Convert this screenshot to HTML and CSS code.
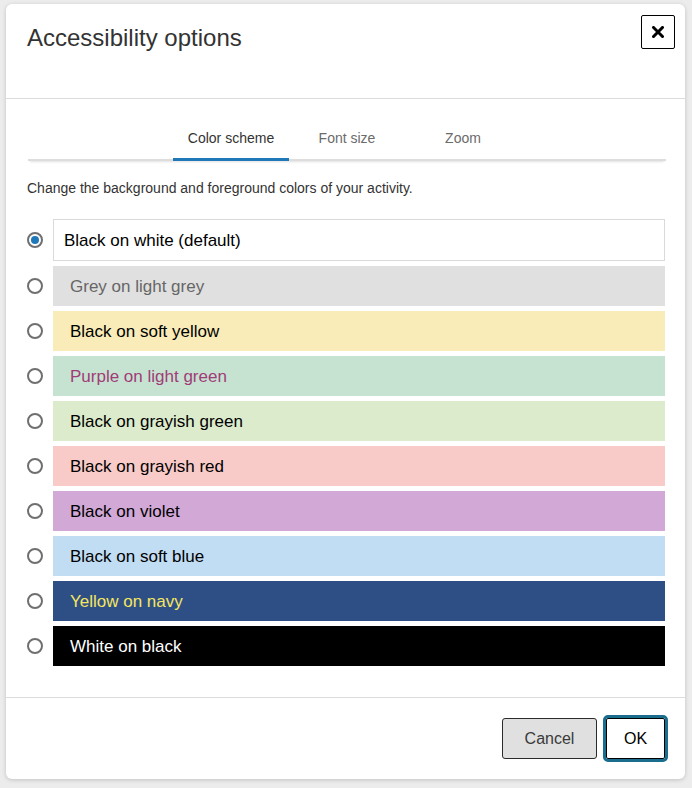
FILE: index.html
```html
<!DOCTYPE html>
<html lang="en">
<head>
<meta charset="utf-8">
<title>Accessibility options</title>
<link rel="stylesheet" href="styles.css">
</head>
<body>
<div class="dialog">
  <div class="dlg-header">
    <h1 class="dlg-title">Accessibility options</h1>
    <button class="close-btn" aria-label="Close">
      <svg width="12" height="12" viewBox="0 0 12 12"><path d="M1.5 1.5L10.5 10.5M10.5 1.5L1.5 10.5" stroke="#000" stroke-width="3" stroke-linecap="square" fill="none"/></svg>
    </button>
  </div>
  <div class="dlg-body">
    <div class="tabs">
      <div class="tab active">Color scheme</div>
      <div class="tab">Font size</div>
      <div class="tab">Zoom</div>
    </div>
    <p class="desc">Change the background and foreground colors of your activity.</p>
    <div class="options">
      <label class="opt"><span class="radio checked"></span><span class="swatch s-default">Black on white (default)</span></label>
      <label class="opt"><span class="radio"></span><span class="swatch s-grey">Grey on light grey</span></label>
      <label class="opt"><span class="radio"></span><span class="swatch s-yellow">Black on soft yellow</span></label>
      <label class="opt"><span class="radio"></span><span class="swatch s-lgreen">Purple on light green</span></label>
      <label class="opt"><span class="radio"></span><span class="swatch s-ggreen">Black on grayish green</span></label>
      <label class="opt"><span class="radio"></span><span class="swatch s-gred">Black on grayish red</span></label>
      <label class="opt"><span class="radio"></span><span class="swatch s-violet">Black on violet</span></label>
      <label class="opt"><span class="radio"></span><span class="swatch s-blue">Black on soft blue</span></label>
      <label class="opt"><span class="radio"></span><span class="swatch s-navy">Yellow on navy</span></label>
      <label class="opt"><span class="radio"></span><span class="swatch s-black">White on black</span></label>
    </div>
  </div>
  <div class="dlg-footer">
    <button class="btn btn-cancel">Cancel</button>
    <button class="btn btn-ok">OK</button>
  </div>
</div>
</body>
</html>
```
FILE: styles.css
```css
* { box-sizing: border-box; }
html, body { margin: 0; }
body {
  background: #ececec;
  font-family: "Liberation Sans", Arial, sans-serif;
  padding: 4px 7px 9px 6px;
  width: 692px;
  height: 788px;
  overflow: hidden;
}
.dialog {
  width: 679px;
  height: 775px;
  background: #fff;
  border-radius: 6px;
  box-shadow: 0 1px 4px rgba(0,0,0,0.18);
  display: flex;
  flex-direction: column;
}
.dlg-header {
  flex: none;
  height: 95px;
  border-bottom: 1px solid #dcdcdc;
  display: flex;
  justify-content: space-between;
  align-items: flex-start;
  padding: 11px 10px 0 21px;
}
.dlg-title {
  margin: 8px 0 0 0;
  font-size: 24px;
  font-weight: normal;
  line-height: 30px;
  color: #333;
}
.close-btn {
  width: 34px;
  height: 34px;
  border: 1px solid #000;
  border-radius: 2px;
  background: #fff;
  padding: 0;
  display: flex;
  align-items: center;
  justify-content: center;
}
.dlg-body {
  flex: none;
  padding: 20px 20px 31px 21px;
  border-bottom: 1px solid #dcdcdc;
}
.tabs {
  display: flex;
  justify-content: center;
  margin: 0 -1px 0 1px;
  border-bottom: 2px solid #dddddd;
  box-shadow: 0 3px 2px -2px rgba(0,0,0,0.12);
  height: 42px;
}
.tab {
  width: 116px;
  height: 42px;
  padding-top: 10px;
  line-height: 18px;
  font-size: 14px;
  text-align: center;
  color: #6b6b6b;
  margin-bottom: -2px;
  border-bottom: 3px solid transparent;
}
.tab.active {
  color: #333;
  border-bottom-color: #1f78b8;
}
.desc {
  margin: 19px 0 0 0;
  font-size: 14px;
  line-height: 16px;
  color: #333;
}
.options {
  margin-top: 23px;
  display: flex;
  flex-direction: column;
  gap: 5px;
}
.opt {
  display: flex;
  align-items: center;
  gap: 10px;
}
.radio {
  width: 16px;
  height: 16px;
  flex: none;
  border: 2px solid #6f6f6f;
  border-radius: 50%;
  background: #fff;
  position: relative;
}
.radio.checked::after {
  content: "";
  position: absolute;
  left: 2px;
  top: 2px;
  width: 8px;
  height: 8px;
  border-radius: 50%;
  background: #1f78b8;
}
.swatch {
  flex: 1;
  height: 40px;
  display: flex;
  align-items: center;
  padding-left: 17px;
  padding-top: 1px;
  font-size: 17px;
  line-height: 20px;
  color: #000;
}
.s-default { height: 42px; border: 1px solid #dadada; padding-left: 10px; background: #fff; }
.s-grey { background: #e0e0e0; color: #666; }
.s-yellow { background: #faecb9; }
.s-lgreen { background: #c6e3d2; color: #a03c77; }
.s-ggreen { background: #dcebcb; }
.s-gred { background: #f8cbc8; }
.s-violet { background: #d1a8d6; }
.s-blue { background: #c0ddf3; }
.s-navy { background: #2d4f86; color: #f5e65e; }
.s-black { background: #000; color: #fff; }
.dlg-footer {
  flex: none;
  display: flex;
  justify-content: flex-end;
  gap: 9px;
  padding: 20px 20px 20px 0;
}
.btn {
  height: 41px;
  font-family: "Liberation Sans", Arial, sans-serif;
  font-size: 16px;
  border-radius: 3px;
  border: 1px solid #2b2b2b;
  padding: 0;
}
.btn-cancel {
  width: 95px;
  background: #e0e0e0;
  color: #3a3a3a;
}
.btn-ok {
  width: 59px;
  background: #fff;
  color: #000;
  border-color: #000;
  outline: 3px solid #1a6d8c;
  outline-offset: 0;
  border-radius: 2px;
}
```
